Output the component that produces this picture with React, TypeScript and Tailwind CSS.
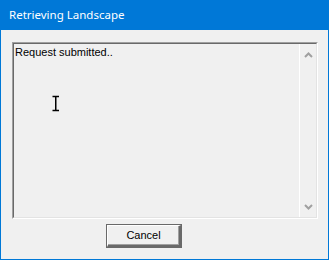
export default function App() {
  return (
    <div className="relative flex h-[260px] w-[329px] flex-col border border-[#0078d7] bg-[#f0f0f0] font-['Liberation_Sans',Arial,sans-serif] text-[11px] text-black">
      <div className="flex h-[29px] shrink-0 items-center bg-[#0078d7] pl-[8px] pb-[1px] font-['Noto_Sans',sans-serif] text-[11.5px] text-white">
        Retrieving Landscape
      </div>

      <div className="flex flex-1 flex-col pl-[11px] pr-[10px] pt-[12px]">
        <div className="h-[177px] border-l border-t border-b border-r border-l-[#a0a0a0] border-t-[#a0a0a0] border-r-white border-b-white">
          <div className="flex h-full border border-l-[#696969] border-t-[#696969] border-r-[#e3e3e3] border-b-[#e3e3e3]">
            <div className="flex-1 pl-[1px] pt-[2px] leading-[13px]">Request submitted..</div>
            <div className="flex w-[17px] flex-col items-center justify-between border-l border-white pt-[8px] pb-[7px]">
              <svg width="9" height="6" viewBox="0 0 9 6">
                <path d="M1 5 L4.5 1.5 L8 5" fill="none" stroke="#a0a0a0" strokeWidth="2" />
              </svg>
              <svg width="9" height="6" viewBox="0 0 9 6">
                <path d="M1 1 L4.5 4.5 L8 1" fill="none" stroke="#a0a0a0" strokeWidth="2" />
              </svg>
            </div>
          </div>
        </div>

        <div className="flex pt-[5px] pl-[94px]">
          <button
            type="button"
            className="h-[24px] w-[76px] border border-[#696969] bg-[#f0f0f0] p-0"
          >
            <div className="flex h-full items-center justify-center border-l border-t border-r-2 border-b-2 border-l-white border-t-white border-r-[#696969] border-b-[#696969] shadow-[inset_-1px_-1px_0_#a0a0a0]">
              Cancel
            </div>
          </button>
        </div>
      </div>

      <svg className="absolute left-[51px] top-[94px]" width="8" height="17" viewBox="0 0 8 17">
        <path d="M0.5 1.5 H7 M0.5 15.5 H7 M3.75 1.5 V15.5" fill="none" stroke="#000" strokeWidth="1.5" />
      </svg>
    </div>
  );
}
